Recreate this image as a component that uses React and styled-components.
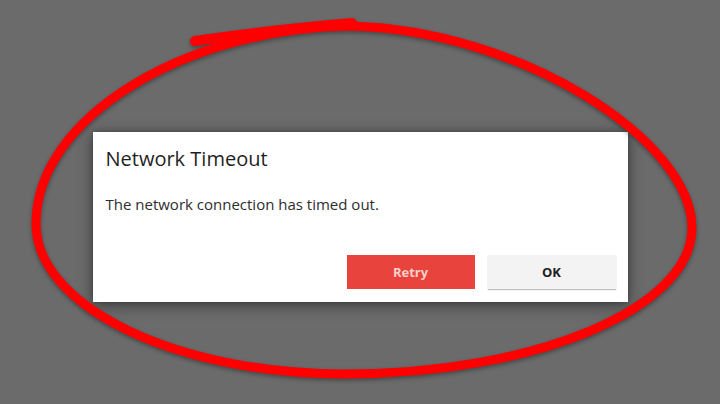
import React from 'react';
import styled, { createGlobalStyle } from 'styled-components';

const GlobalStyle = createGlobalStyle`
  html, body {
    margin: 0;
    padding: 0;
    background: #6b6b6b;
  }
  body {
    font-family: "Open Sans", "Noto Sans", sans-serif;
  }
`;

const Screen = styled.div`
  position: relative;
  width: 720px;
  height: 404px;
  overflow: hidden;
  background: #6b6b6b;
  display: flex;
  flex-direction: column;
  align-items: center;
  padding-top: 132px;
  box-sizing: border-box;
`;

const Dialog = styled.div`
  width: 535px;
  height: 170px;
  box-sizing: border-box;
  background: #fff;
  padding: 15px 12px 13px 13px;
  display: flex;
  flex-direction: column;
  box-shadow: 0 3px 14px rgba(0, 0, 0, 0.45), 0 0 4px rgba(0, 0, 0, 0.25);
`;

const Title = styled.h2`
  margin: 0;
  font-size: 20px;
  font-weight: 400;
  line-height: 24px;
  color: #1f1f1f;
`;

const Message = styled.p`
  margin: 23px 0 0 0;
  font-size: 15px;
  line-height: 20px;
  color: #2d2d2d;
`;

const Actions = styled.div`
  margin-top: auto;
  display: flex;
  justify-content: flex-end;
  gap: 13px;
`;

const Button = styled.button`
  width: 128px;
  height: 34px;
  border: none;
  border-radius: 0;
  font-family: "Open Sans", "Noto Sans", sans-serif;
  font-size: 13px;
  font-weight: 700;
  cursor: pointer;
  background: ${p => (p.$primary ? '#e8443d' : '#f3f3f3')};
  color: ${p => (p.$primary ? '#f8cfca' : '#1e1e1e')};
  box-shadow: ${p => (p.$primary ? 'none' : '0 1px 1px rgba(0, 0, 0, 0.25)')};
`;

const Scribble = styled.svg`
  position: absolute;
  left: 0;
  top: 0;
  width: 720px;
  height: 404px;
  pointer-events: none;
  filter: drop-shadow(0 2px 2px rgba(0, 0, 0, 0.35));
`;

// hand-drawn red loop around the dialog
const RedLoop = () => (
  <Scribble viewBox="0 0 720 404">
    <path
      d="M195 41 Q 270 30 352 23"
      fill="none"
      stroke="#ff0000"
      strokeWidth="10"
      strokeLinecap="round"
    />
    <path
      d="M350 26
         C 520 30, 692 140, 692 228
         C 692 308, 536 374, 345 374
         C 175 374, 36 306, 36 224
         C 36 115, 190 28, 350 26 Z"
      fill="none"
      stroke="#ff0000"
      strokeWidth="9"
      strokeLinejoin="round"
    />
  </Scribble>
);

const App = () => (
  <>
    <GlobalStyle />
    <Screen>
      <Dialog>
        <Title>Network Timeout</Title>
        <Message>The network connection has timed out.</Message>
        <Actions>
          <Button $primary>Retry</Button>
          <Button>OK</Button>
        </Actions>
      </Dialog>
      <RedLoop />
    </Screen>
  </>
);

export default App;
